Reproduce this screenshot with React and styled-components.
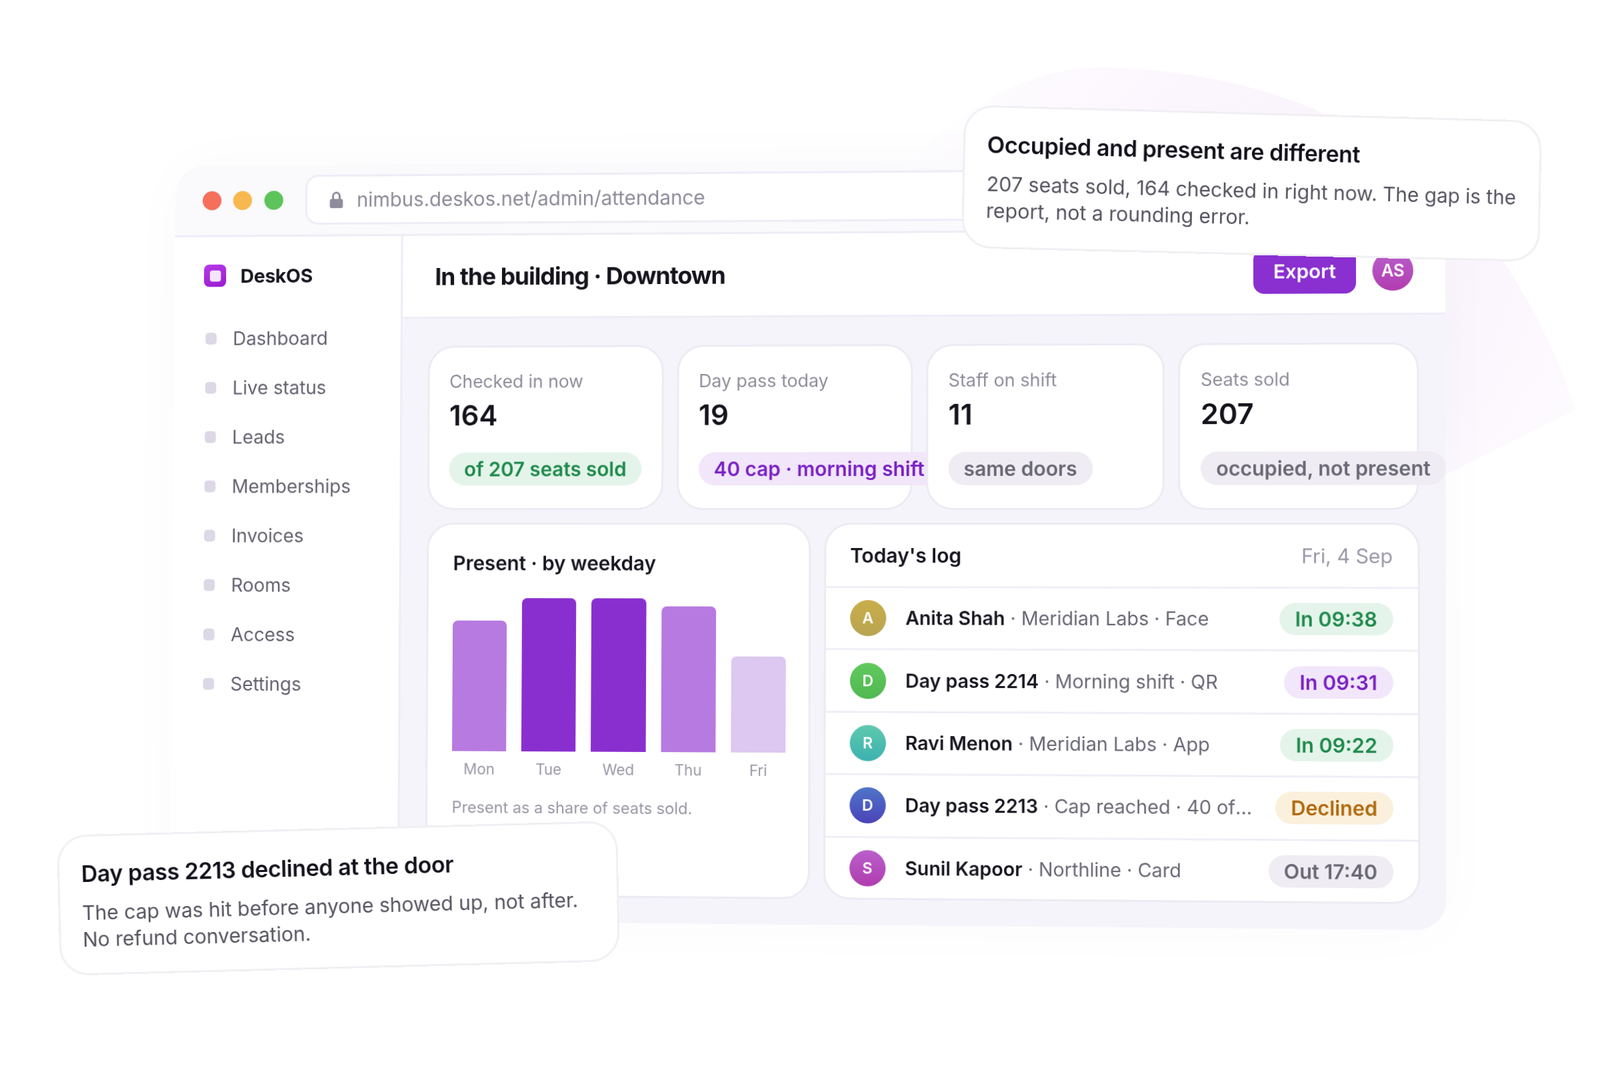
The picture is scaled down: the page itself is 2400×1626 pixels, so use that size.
import styled, { createGlobalStyle } from "styled-components";

const GlobalStyle = createGlobalStyle`
  html, body { margin: 0; padding: 0; background: #fff; }
  body { font-family: Inter, "Noto Sans", sans-serif; color: #15131c; }
`;

// maps a w x h box onto four page points (tl, tr, br, bl)
function quad(w, h, [p0, p1, p2, p3]) {
  const sx = p0[0] - p1[0] + p2[0] - p3[0];
  const sy = p0[1] - p1[1] + p2[1] - p3[1];
  const dx1 = p1[0] - p2[0];
  const dx2 = p3[0] - p2[0];
  const dy1 = p1[1] - p2[1];
  const dy2 = p3[1] - p2[1];
  const den = dx1 * dy2 - dx2 * dy1;
  const g = (sx * dy2 - dx2 * sy) / den;
  const k = (dx1 * sy - sx * dy1) / den;
  const a = p1[0] - p0[0] + g * p1[0];
  const b = p3[0] - p0[0] + k * p3[0];
  const d = p1[1] - p0[1] + g * p1[1];
  const e = p3[1] - p0[1] + k * p3[1];
  return `matrix3d(${a / w},${d / w},0,${g / w},${b / h},${e / h},0,${k / h},0,0,1,0,${p0[0]},${p0[1]},0,1)`;
}

const Stage = styled.div`
  position: relative;
  width: 2400px;
  height: 1626px;
  overflow: hidden;
  background: #fff;
`;

const Blob = styled.svg`
  position: absolute;
  left: 0;
  top: 0;
`;

const Window = styled.div`
  position: absolute;
  left: 0;
  top: 0;
  width: 1908px;
  height: 1146px;
  transform-origin: 0 0;
  border-radius: 44px;
  overflow: hidden;
  background: #fff;
  display: flex;
  flex-direction: column;
  filter: blur(0.6px);
`;

const WindowShadow = styled.div`
  position: absolute;
  left: 0;
  top: 0;
  width: 1908px;
  height: 1146px;
  transform-origin: 0 0;
  border-radius: 44px;
  box-shadow: 0 0 90px rgba(70, 40, 120, 0.022);
`;

const TitleBar = styled.div`
  height: 109px;
  flex: none;
  display: flex;
  align-items: center;
  gap: 18.4px;
  padding: 0 60px 0 42px;
  background: #faf9fc;
  border-bottom: 3px solid #eeecf5;
  box-sizing: border-box;
`;

const TrafficDot = styled.span`
  width: 29px;
  height: 29px;
  border-radius: 50%;
  flex: none;
  background: ${(p) => p.$color};
`;

const AddressBar = styled.div`
  flex: 1;
  height: 76px;
  margin-left: 15.5px;
  display: flex;
  align-items: center;
  gap: 21px;
  padding: 0 34px;
  background: #fff;
  border: 3px solid #eeecf5;
  border-radius: 20px;
  box-sizing: border-box;
  font-size: 29.8px;
  color: #8d8a99;
`;

const Body = styled.div`
  flex: 1;
  min-height: 0;
  display: flex;
`;

const Sidebar = styled.aside`
  width: 350px;
  flex: none;
  padding: 40px 0 0 45px;
  box-sizing: border-box;
  border-right: 3px solid #eeecf5;
`;

const Brand = styled.div`
  display: flex;
  align-items: center;
  gap: 22px;
  font-size: 29px;
  font-weight: 700;
  letter-spacing: -0.01em;
  color: #17151f;
  height: 38px;
  margin-bottom: 39px;
`;

const BrandMark = styled.span`
  width: 34px;
  height: 34px;
  border-radius: 8px;
  background: linear-gradient(160deg, #b53ce8, #9a1acf);
  display: flex;
  align-items: center;
  justify-content: center;
  &::after {
    content: "";
    width: 17px;
    height: 17px;
    border-radius: 4px;
    background: rgba(255, 255, 255, 0.88);
  }
`;

const Nav = styled.nav`
  padding-left: 3px;
`;

const NavItem = styled.div`
  height: 75px;
  display: flex;
  align-items: center;
  gap: 25px;
  font-size: 28.3px;
  color: #64616f;
  &::before {
    content: "";
    width: 17px;
    height: 18px;
    border-radius: 5px;
    background: #dcd8e6;
  }
`;

const Content = styled.main`
  flex: 1;
  min-width: 0;
  display: flex;
  flex-direction: column;
  overflow: hidden;
`;

const TopBar = styled.div`
  height: 126px;
  flex: none;
  display: flex;
  align-items: center;
  padding: 0 47px 0 49px;
  border-bottom: 3px solid #eeecf5;
  box-sizing: border-box;
`;

const PageTitle = styled.h1`
  flex: 1;
  margin: 0;
  font-size: 36px;
  font-weight: 700;
  letter-spacing: -0.028em;
  color: #15131c;
`;

const ExportButton = styled.div`
  width: 151px;
  height: 67px;
  margin-bottom: 3px;
  border-radius: 16px;
  background: #8a2fd0;
  color: #fff;
  font-size: 29px;
  font-weight: 600;
  display: flex;
  align-items: center;
  justify-content: center;
`;

const UserBadge = styled.div`
  width: 60px;
  height: 60px;
  margin: 0 0 3px 24px;
  border-radius: 50%;
  background: linear-gradient(180deg, #b85fcb, #b13cb0);
  color: #fff;
  font-size: 25px;
  font-weight: 600;
  display: flex;
  align-items: center;
  justify-content: center;
`;

const Canvas = styled.div`
  flex: 1;
  min-height: 0;
  display: flex;
  flex-direction: column;
  gap: 18.5px;
  padding: 41px 38.5px 0 39px;
  background: #f6f4fb;
`;

const StatRow = styled.div`
  display: grid;
  grid-template-columns: minmax(0, 1.01fr) repeat(3, minmax(0, 1fr));
  gap: 20px;
`;

const Panel = styled.div`
  background: #fff;
  border: 3px solid #ecebf3;
  border-radius: 40px;
  box-sizing: border-box;
`;

const StatCard = styled(Panel)`
  height: 249px;
  padding: 31px 30px;
  display: flex;
  flex-direction: column;
  align-items: flex-start;
`;

const StatLabel = styled.div`
  font-size: 26.8px;
  line-height: 40px;
  color: #8f8c9b;
`;

const StatValue = styled.div`
  margin-top: 4px;
  font-size: 42.5px;
  line-height: 56px;
  font-weight: 600;
  color: #15131c;
`;

const chipTones = {
  green: ["#e4f4ea", "#1f8a4c"],
  purple: ["#f1e6fa", "#7b22c4"],
  grey: ["#efedf3", "#6a6775"],
  amber: ["#fbf0db", "#b06a10"],
};

const Chip = styled.span`
  flex: none;
  height: 48px;
  padding: 0 23px;
  display: inline-flex;
  align-items: center;
  border-radius: 25px;
  white-space: nowrap;
  font-size: 29.8px;
  font-weight: 600;
  background: ${(p) => chipTones[p.$tone][0]};
  color: ${(p) => chipTones[p.$tone][1]};
`;

const StatChip = styled(Chip)`
  height: 50px;
  margin-top: 28px;
`;

const LowerRow = styled.div`
  flex: 1;
  min-height: 0;
  display: grid;
  grid-template-columns: minmax(0, 584fr) minmax(0, 886fr);
  gap: 20px;
`;

const ChartCard = styled(Panel)`
  height: 564.5px;
  padding: 39px 34px 0 37px;
`;

const CardTitle = styled.div`
  font-size: 29.8px;
  line-height: 38px;
  font-weight: 600;
  color: #17151f;
`;

const Bars = styled.div`
  margin-top: 34px;
  height: 231px;
  display: grid;
  grid-template-columns: repeat(5, 1fr);
  gap: 23px;
  align-items: end;
`;

const Bar = styled.div`
  border-radius: 8px 8px 0 0;
  background: ${(p) => p.$color};
`;

const BarLabels = styled.div`
  margin-top: 10px;
  display: grid;
  grid-template-columns: repeat(5, 1fr);
  gap: 23px;
  font-size: 22.5px;
  line-height: 34px;
  color: #9a97a6;
  text-align: center;
`;

const ChartNote = styled.div`
  margin-top: 24px;
  font-size: 23.7px;
  line-height: 34px;
  color: #9a97a6;
`;

const LogCard = styled(Panel)`
  height: 564.5px;
  overflow: hidden;
`;

const LogHeader = styled.div`
  height: 92.5px;
  padding: 0 36px 0 35.5px;
  display: flex;
  align-items: center;
  justify-content: space-between;
`;

const LogDate = styled.div`
  font-size: 29.6px;
  color: #9a97a6;
`;

const LogRow = styled.div`
  height: 93.4px;
  padding: 0 36px 0 35.5px;
  display: flex;
  align-items: center;
  gap: 29px;
  border-top: 3px solid #f0eef6;
  box-sizing: border-box;
`;

const Avatar = styled.div`
  width: 54px;
  height: 54px;
  flex: none;
  border-radius: 50%;
  background: ${(p) => p.$fill};
  color: #fff;
  font-size: 23px;
  font-weight: 600;
  display: flex;
  align-items: center;
  justify-content: center;
`;

const LogText = styled.div`
  flex: 1;
  min-width: 0;
  margin-right: -2px;
  overflow: hidden;
  white-space: nowrap;
  text-overflow: ellipsis;
  font-size: 28.3px;
  color: #6a6775;
`;

const LogName = styled.span`
  font-weight: 600;
  color: #17151f;
`;

const Callout = styled.div`
  position: absolute;
  left: 0;
  top: 0;
  width: ${(p) => p.$w}px;
  height: ${(p) => p.$h}px;
  transform-origin: 0 0;
  box-sizing: border-box;
  padding: 37px 20px 0 32.5px;
  background: #fff;
  border: 3px solid #f0eff3;
  border-radius: 44px;
`;

const CalloutTitle = styled.div`
  font-size: 33.8px;
  line-height: 38px;
  font-weight: 600;
  letter-spacing: -0.01em;
  color: #12101a;
`;

const CalloutBody = styled.div`
  margin-top: 19px;
  font-size: 30px;
  line-height: 40px;
  color: #55525f;
`;

const LockIcon = () => (
  <svg width="21" height="25" viewBox="0 0 21 25" fill="none">
    <path d="M5.5 12V6.5a5 5 0 0 1 10 0V12" stroke="#8f8b9b" strokeWidth="3" />
    <rect x="0.5" y="11" width="20" height="14" rx="3" fill="#8f8b9b" />
  </svg>
);

const navItems = ["Dashboard", "Live status", "Leads", "Memberships", "Invoices", "Rooms", "Access", "Settings"];

const stats = [
  { label: "Checked in now", value: "164", chip: "of 207 seats sold", tone: "green" },
  { label: "Day pass today", value: "19", chip: "40 cap · morning shift", tone: "purple" },
  { label: "Staff on shift", value: "11", chip: "same doors", tone: "grey" },
  { label: "Seats sold", value: "207", chip: "occupied, not present", tone: "grey" },
];

const days = [
  { day: "Mon", h: 197, color: "#b77ae0" },
  { day: "Tue", h: 231, color: "#8a2fcf" },
  { day: "Wed", h: 231, color: "#8a2fcf" },
  { day: "Thu", h: 219, color: "#b77ae0" },
  { day: "Fri", h: 144, color: "#dcc8f0" },
];

const log = [
  { id: "A", fill: "linear-gradient(180deg,#c9ad48,#b9a452)", name: "Anita Shah", meta: " · Meridian Labs · Face", chip: "In 09:38", tone: "green" },
  { id: "D", fill: "linear-gradient(180deg,#62c95f,#4fb84f)", name: "Day pass 2214", meta: " · Morning shift · QR", chip: "In 09:31", tone: "purple" },
  { id: "R", fill: "linear-gradient(180deg,#5fc9ae,#3bb1b0)", name: "Ravi Menon", meta: " · Meridian Labs · App", chip: "In 09:22", tone: "green" },
  { id: "D", fill: "linear-gradient(180deg,#4f75c8,#4a43b8)", name: "Day pass 2213", meta: " · Cap reached · 40 of 40 today", chip: "Declined", tone: "amber" },
  { id: "S", fill: "linear-gradient(180deg,#b85fcb,#b13cb0)", name: "Sunil Kapoor", meta: " · Northline · Card", chip: "Out 17:40", tone: "grey" },
];

const windowCorners = [[263.5, 249], [2168, 235], [2170, 1395.5], [255, 1379]];
const topCorners = [[1446, 157], [2313, 181], [2309, 393], [1442, 372]];
const bottomCorners = [[85, 1253], [926, 1231], [930, 1442], [90, 1464]];

function App() {
  const windowMatrix = quad(1908, 1146, windowCorners);
  return (
    <Stage>
      <GlobalStyle />
      <Blob width="2400" height="1626" viewBox="0 0 2400 1626">
        <defs>
          <radialGradient id="blobFill" gradientUnits="userSpaceOnUse" cx="1950" cy="380" r="620">
            <stop offset="0" stopColor="#f9f0fb" />
            <stop offset="0.5" stopColor="#fbf6fd" />
            <stop offset="0.75" stopColor="#fdfafe" />
            <stop offset="1" stopColor="#ffffff" />
          </radialGradient>
        </defs>
        <path
          d="M1300 330C1400 170 1540 100 1655 101C1770 104 1880 125 1974 165C2090 225 2190 310 2255 392C2300 460 2340 540 2363 615L2168 712H1300Z"
          fill="url(#blobFill)"
        />
      </Blob>
      <WindowShadow style={{ transform: windowMatrix }} />
      <Window style={{ transform: windowMatrix }}>
        <TitleBar>
          <TrafficDot $color="#f4705b" />
          <TrafficDot $color="#f7b84f" />
          <TrafficDot $color="#5cc45a" />
          <AddressBar>
            <LockIcon />
            nimbus.deskos.net/admin/attendance
          </AddressBar>
        </TitleBar>
        <Body>
          <Sidebar>
            <Brand>
              <BrandMark />
              DeskOS
            </Brand>
            <Nav>
              {navItems.map((item) => (
                <NavItem key={item}>{item}</NavItem>
              ))}
            </Nav>
          </Sidebar>
          <Content>
            <TopBar>
              <PageTitle>In the building · Downtown</PageTitle>
              <ExportButton>Export</ExportButton>
              <UserBadge>AS</UserBadge>
            </TopBar>
            <Canvas>
              <StatRow>
                {stats.map((s) => (
                  <StatCard key={s.label}>
                    <StatLabel>{s.label}</StatLabel>
                    <StatValue>{s.value}</StatValue>
                    <StatChip $tone={s.tone}>{s.chip}</StatChip>
                  </StatCard>
                ))}
              </StatRow>
              <LowerRow>
                <ChartCard>
                  <CardTitle>Present · by weekday</CardTitle>
                  <Bars>
                    {days.map((d) => (
                      <Bar key={d.day} $color={d.color} style={{ height: d.h }} />
                    ))}
                  </Bars>
                  <BarLabels>
                    {days.map((d) => (
                      <span key={d.day}>{d.day}</span>
                    ))}
                  </BarLabels>
                  <ChartNote>Present as a share of seats sold.</ChartNote>
                </ChartCard>
                <LogCard>
                  <LogHeader>
                    <CardTitle>Today's log</CardTitle>
                    <LogDate>Fri, 4 Sep</LogDate>
                  </LogHeader>
                  {log.map((row) => (
                    <LogRow key={row.name}>
                      <Avatar $fill={row.fill}>{row.id}</Avatar>
                      <LogText>
                        <LogName>{row.name}</LogName>
                        {row.meta}
                      </LogText>
                      <Chip $tone={row.tone}>{row.chip}</Chip>
                    </LogRow>
                  ))}
                </LogCard>
              </LowerRow>
            </Canvas>
          </Content>
        </Body>
      </Window>
      <Callout $w={867} $h={214} style={{ transform: quad(867, 214, topCorners) }}>
        <CalloutTitle>Occupied and present are different</CalloutTitle>
        <CalloutBody>207 seats sold, 164 checked in right now. The gap is the report, not a rounding error.</CalloutBody>
      </Callout>
      <Callout $w={841} $h={211} style={{ transform: quad(841, 211, bottomCorners) }}>
        <CalloutTitle>Day pass 2213 declined at the door</CalloutTitle>
        <CalloutBody>The cap was hit before anyone showed up, not after. No refund conversation.</CalloutBody>
      </Callout>
    </Stage>
  );
}

export default App;
